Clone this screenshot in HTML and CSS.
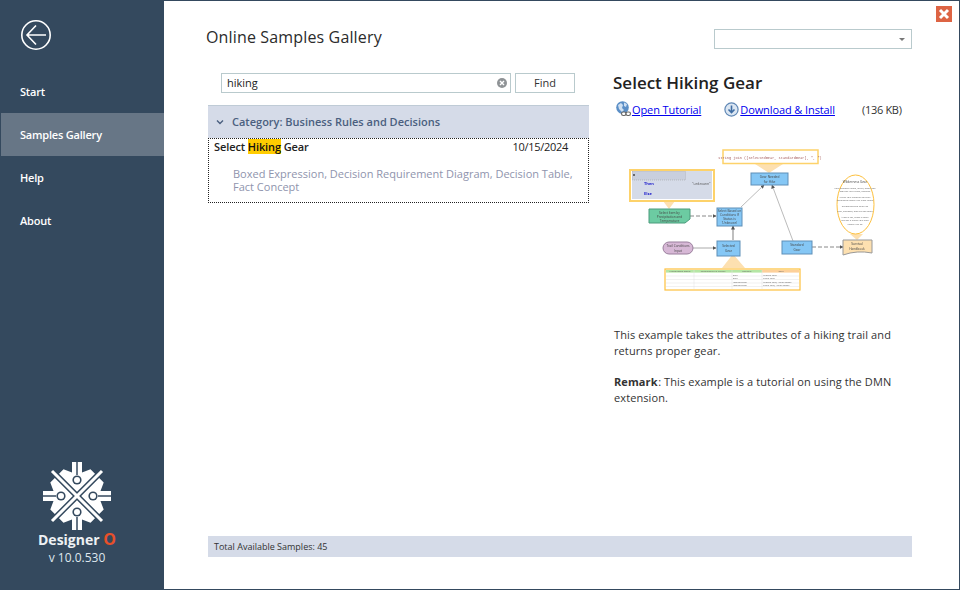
FILE: index.html
```html
<!DOCTYPE html>
<html lang="en">
<head>
    <meta charset="UTF-8">
    <title>Online Samples Gallery</title>
    <link rel="stylesheet" href="styles.css">
</head>
<body>
    <div class="window">
        <aside class="sidebar">
            <svg class="back-icon" width="32" height="32" viewBox="0 0 32 32">
                <circle cx="16" cy="16" r="14.2" fill="none" stroke="#fff" stroke-width="1.6"/>
                <path d="M26 16H7M16 6.5L7 16l9 9.5" fill="none" stroke="#fff" stroke-width="1.6"/>
            </svg>
            <nav class="nav">
                <a class="nav-item">Start</a>
                <a class="nav-item active">Samples Gallery</a>
                <a class="nav-item">Help</a>
                <a class="nav-item">About</a>
            </nav>
            <div class="brand">
                <svg class="brand-logo" width="68" height="68" viewBox="0 0 68 68">
                    <defs>
                        <g id="wedge">
                            <path d="M34 29.8L16 11.8 20.5 7.3 29 10.5V0H39V10.5L47.5 7.3 52 11.8Z" fill="#fff"/>
                            <path d="M34 0V13" stroke="#34495e" stroke-width="1.5"/>
                            <circle cx="34" cy="18" r="4.6" fill="#34495e"/>
                            <circle cx="34" cy="18" r="3" fill="#fff"/>
                        </g>
                    </defs>
                    <use href="#wedge"/>
                    <use href="#wedge" transform="rotate(90 34 34)"/>
                    <use href="#wedge" transform="rotate(180 34 34)"/>
                    <use href="#wedge" transform="rotate(270 34 34)"/>
                    <path d="M9 9L59 59M59 9L9 59" stroke="#fff" stroke-width="3"/>
                </svg>
                <div class="brand-name">Designer <span class="brand-o">O</span></div>
                <div class="brand-version">v 10.0.530</div>
            </div>
        </aside>

        <main class="content">
            <button class="close-btn" aria-label="Close">
                <svg width="16" height="16" viewBox="0 0 16 16">
                    <path d="M4 4L12 12M12 4L4 12" stroke="#fff" stroke-width="3"/>
                </svg>
            </button>

            <header class="top-row">
                <h1>Online Samples Gallery</h1>
                <div class="combo"><span class="combo-arrow"></span></div>
            </header>

            <div class="columns">
                <section class="results">
                    <div class="search-row">
                        <div class="search-box">
                            <span>hiking</span>
                            <svg width="10" height="10" viewBox="0 0 10 10">
                                <circle cx="5" cy="5" r="5" fill="#8f9396"/>
                                <path d="M3 3L7 7M7 3L3 7" stroke="#fff" stroke-width="1.4"/>
                            </svg>
                        </div>
                        <div class="find-btn">Find</div>
                    </div>

                    <div class="category">
                        <svg width="8" height="6" viewBox="0 0 8 6">
                            <path d="M1 1.5L4 4.5 7 1.5" fill="none" stroke="#4a5f7f" stroke-width="1.4"/>
                        </svg>
                        <span>Category: Business Rules and Decisions</span>
                    </div>

                    <div class="sample">
                        <div class="sample-head">
                            <span class="sample-name">Select <mark>Hiking</mark> Gear</span>
                            <span class="sample-date">10/15/2024</span>
                        </div>
                        <p class="sample-tags">Boxed Expression, Decision Requirement Diagram, Decision Table, Fact Concept</p>
                    </div>
                </section>

                <section class="detail">
                    <h2>Select Hiking Gear</h2>
                    <div class="links">
                        <svg class="link-icon" width="16" height="16" viewBox="0 0 16 16">
                            <circle cx="6.5" cy="6.5" r="6.3" fill="#5b8fc7"/>
                            <path d="M2 4l3-2 2 2-1 3 2 2-2 2-3-3zM8 1.5l3 1.5-1 3-2-1z" fill="#cfe0f2"/>
                            <g fill="#fff" stroke="#666" stroke-width="1.1">
                                <rect x="5.5" y="11" width="4.5" height="3.5" rx="1.7"/>
                                <rect x="10" y="11" width="4.5" height="3.5" rx="1.7"/>
                            </g>
                        </svg>
                        <a class="link link-tutorial">Open Tutorial</a>
                        <svg class="link-icon" width="15" height="15" viewBox="0 0 15 15">
                            <circle cx="7.5" cy="7.5" r="6.6" fill="#dbe6f2" stroke="#5f87b5" stroke-width="1.2"/>
                            <path d="M7.5 3.5V10.5M4.5 7.5l3 3 3-3" fill="none" stroke="#3f6da3" stroke-width="1.6"/>
                        </svg>
                        <a class="link">Download &amp; Install</a>
                        <span class="size">(136 KB)</span>
                    </div>

                    <!-- viewBox uses page coordinates so the nodes line up with the screenshot -->
                    <svg class="diagram" width="290" height="160" viewBox="613 140 290 160">
                        <defs>
                            <marker id="tip" markerUnits="userSpaceOnUse" markerWidth="4" markerHeight="4" refX="3.5" refY="2" orient="auto">
                                <path d="M0 0L4 2 0 4Z" fill="#555"/>
                            </marker>
                        </defs>

                        <!-- callout wedges -->
                        <g fill="#fde0b0">
                            <path d="M663 201H675L669 209Z"/>
                            <path d="M755 164H783L769 173Z"/>
                            <path d="M722 268H745L733 254Z"/>
                            <path d="M850 234H863L857 240Z"/>
                        </g>

                        <!-- connectors -->
                        <g fill="none" stroke="#aaa" marker-end="url(#tip)">
                            <path d="M733 240V226" stroke-width="1.5"/>
                            <path d="M693 248H716" stroke-width="1"/>
                            <path d="M741 207L764 185" stroke-width=".8"/>
                            <path d="M793 241L772 185" stroke-width=".8"/>
                        </g>
                        <g fill="none" stroke="#888" stroke-dasharray="4 2" marker-end="url(#tip)">
                            <path d="M690 216H716"/>
                            <path d="M812 247H843"/>
                        </g>

                        <!-- boxed expression callout -->
                        <rect x="630" y="170" width="84" height="31" fill="#fff" stroke="#fdd26a" stroke-width="2"/>
                        <rect x="632" y="171" width="80" height="28" fill="#d5dbe8"/>
                        <rect x="632.5" y="171.5" width="53" height="8.5" fill="#c9cfdd" stroke="#999" stroke-width=".5" stroke-dasharray="1 1"/>
                        <circle cx="634" cy="175" r="1" fill="#444"/>
                        <g class="diagram-blue">
                            <text x="644" y="185">Then</text>
                            <text x="644" y="195">Else</text>
                        </g>
                        <text class="diagram-small" x="692" y="185">"unknown"</text>

                        <!-- nodes -->
                        <g stroke="#5e8fb8" fill="#85c7f5">
                            <rect x="717" y="208" width="25" height="18"/>
                            <rect x="717" y="241" width="23" height="15"/>
                            <rect x="751" y="173" width="37" height="12"/>
                            <rect x="782" y="241" width="30" height="13"/>
                        </g>
                        <path d="M649 209H690V219L685 223H649Z" fill="#6ccba2" stroke="#4a9b7c"/>
                        <rect x="663" y="242" width="30" height="12" rx="6" fill="#d7b8d6" stroke="#9a7f9d"/>
                        <path d="M843 240H872V253Q857 250 843 255Z" fill="#fde0b0" stroke="#999"/>
                        <ellipse cx="855.5" cy="204.5" rx="18.5" ry="29.5" fill="#fff" stroke="#fdc03d"/>

                        <!-- code callout -->
                        <rect x="723" y="150" width="95" height="13.5" fill="#fff" stroke="#fdd26a" stroke-width="1.5"/>
                        <text class="diagram-code" x="770" y="158.5" text-anchor="middle">string join ([selectedGear, standardGear], ", ")</text>

                        <!-- decision table -->
                        <rect x="665" y="269" width="135" height="21" fill="#fff" stroke="#fdc03d" stroke-width="1.2"/>
                        <rect x="666" y="270" width="96" height="2.6" fill="#b5e6a5"/>
                        <rect x="762" y="270" width="37" height="2.6" fill="#fdd09a"/>
                        <path d="M666 276H799M666 279.5H799M666 283H799M666 286.5H799M694 270V289M732 270V289M762 270V289" stroke="#e2e2e2" stroke-width=".5"/>
                        <g class="diagram-table">
                            <text x="680" y="272.2" text-anchor="middle">Precipitation Status</text>
                            <text x="713" y="272.2" text-anchor="middle">Temperature in Celsius</text>
                            <text x="747" y="272.2" text-anchor="middle">Difficulty</text>
                            <text x="781" y="272.2" text-anchor="middle">Gear</text>
                            <text x="733" y="275.5">Easy</text>
                            <text x="763" y="275.5">Mittens Coat</text>
                            <text x="733" y="279">Easy</text>
                            <text x="763" y="279">Parka Coat</text>
                            <text x="733" y="282.5">Intermediate</text>
                            <text x="763" y="282.5">Mittens Coat, Hiking Boots</text>
                            <text x="733" y="286">Intermediate</text>
                            <text x="763" y="286">Parka Coat, Hiking Boots</text>
                        </g>

                        <!-- node labels -->
                        <g class="diagram-text">
                            <text x="669.5" y="214">Select Item by</text>
                            <text x="669.5" y="218">Precipitation and</text>
                            <text x="669.5" y="222">Temperature</text>
                            <text x="729.5" y="212">Select Based on</text>
                            <text x="729.5" y="216">Conditions If</text>
                            <text x="729.5" y="220">Status is</text>
                            <text x="729.5" y="224">'Unknown'</text>
                            <text x="728.5" y="247">Selected</text>
                            <text x="728.5" y="252">Gear</text>
                            <text x="769.5" y="178">Gear Needed</text>
                            <text x="769.5" y="183">for Hike</text>
                            <text x="797" y="246">Standard</text>
                            <text x="797" y="251">Gear</text>
                            <text x="678" y="247">Trail Conditions</text>
                            <text x="678" y="252">Input</text>
                            <text x="857" y="245">Survival</text>
                            <text x="857" y="250">Handbook</text>
                            <text x="855" y="183">Wilderness Gear</text>
                        </g>
                        <g class="diagram-table">
                            <text x="855" y="188.5" text-anchor="middle">Pack essential items, layers, water and</text>
                            <text x="855" y="192" text-anchor="middle">food for your route, distance</text>
                            <text x="855" y="197.5" text-anchor="middle">Check your weather and trail</text>
                            <text x="855" y="201" text-anchor="middle">conditions before you leave home</text>
                            <text x="855" y="206.5" text-anchor="middle">Recommended Gear List</text>
                            <text x="855" y="212" text-anchor="middle">Map, compass, first aid and more</text>
                            <text x="855" y="217.5" text-anchor="middle">Make a list, check it twice</text>
                            <text x="855" y="221" text-anchor="middle">and tell a friend your plan</text>
                            <text x="855" y="224.5" text-anchor="middle">before you go</text>
                        </g>
                    </svg>

                    <p class="desc">This example takes the attributes of a hiking trail and returns proper gear.</p>
                    <p class="desc"><b>Remark</b>: This example is a tutorial on using the DMN extension.</p>
                </section>
            </div>

            <footer class="status">Total Available Samples: 45</footer>
        </main>
    </div>
</body>
</html>
```

FILE: styles.css
```css
* {
    margin: 0;
    padding: 0;
    box-sizing: border-box;
    font-family: 'Open Sans', 'Noto Sans', sans-serif;
}

html, body {
    width: 960px;
    height: 590px;
    overflow: hidden;
}

.window {
    position: relative;
    display: flex;
    width: 960px;
    height: 590px;
    background-color: white;
    border: 1px solid #34495e;
    color: #222;
}

.sidebar {
    display: flex;
    flex-direction: column;
    width: 163px;
    background-color: #34495e;
    color: white;
}

.back-icon {
    margin: 18px 0 0 19px;
}

.nav {
    display: flex;
    flex-direction: column;
    margin-top: 19px;
}

.nav-item {
    display: flex;
    align-items: center;
    height: 43px;
    padding: 0 0 1px 19px;
    font-size: 11px;
    font-weight: 600;
    letter-spacing: -0.2px;
}

.nav-item.active {
    background-color: #677686;
}

.brand {
    display: flex;
    flex-direction: column;
    align-items: center;
    margin-top: auto;
    padding: 0 11px 24px 0;
}

.brand-name {
    margin-top: 1px;
    font-size: 14px;
    font-weight: 700;
    line-height: 18px;
    color: #eef1f4;
}

.brand-o {
    color: #e8502a;
    font-size: 16px;
    line-height: 16px;
}

.brand-version {
    margin-top: 1px;
    font-size: 12px;
    line-height: 15px;
    color: #dfe7ef;
}

.content {
    position: relative;
    display: flex;
    flex-direction: column;
    flex: 1;
    padding: 28px 47px 32px 44px;
}

.close-btn {
    position: absolute;
    top: 5px;
    right: 7px;
    width: 16px;
    height: 16px;
    border: none;
    background-color: #dd6444;
    display: flex;
}

.top-row {
    display: flex;
    justify-content: space-between;
    align-items: flex-start;
}

.top-row h1 {
    margin-left: -2px;
    font-size: 16px;
    font-weight: 400;
    line-height: 16px;
    letter-spacing: 0.15px;
    color: #2b2b2b;
}

.combo {
    position: relative;
    width: 198px;
    height: 20px;
    border: 1px solid #b9cacd;
}

.combo-arrow {
    position: absolute;
    top: 8px;
    right: 6px;
    border-left: 3px solid transparent;
    border-right: 3px solid transparent;
    border-top: 3px solid #777;
}

.columns {
    display: flex;
    flex: 1;
    margin-top: 24px;
}

.results {
    width: 381px;
    margin-right: 24px;
}

.search-row {
    display: flex;
    gap: 4px;
    margin-left: 13px;
    width: 354px;
}

.search-box {
    display: flex;
    justify-content: space-between;
    align-items: center;
    flex: 1;
    height: 20px;
    padding: 0 3px 1px 5px;
    border: 1px solid #b9cacd;
    font-size: 11px;
}

.find-btn {
    display: flex;
    justify-content: center;
    align-items: center;
    width: 60px;
    height: 20px;
    padding-bottom: 1px;
    border: 1px solid #b9cacd;
    font-size: 11px;
    color: #333;
}

.category {
    display: flex;
    align-items: center;
    gap: 8px;
    height: 33px;
    margin-top: 12px;
    padding: 0 0 1px 8px;
    background-color: #d5dbe8;
    border-top: 1px solid #bfcbd6;
    color: #4a5f7f;
    font-size: 11px;
    font-weight: 600;
}

.sample {
    height: 65px;
    padding: 1px 5px;
    border: 1px dotted #222;
}

.sample-head {
    display: flex;
    justify-content: space-between;
    padding-right: 15px;
    font-size: 11px;
    line-height: 14px;
}

.sample-name {
    font-weight: 600;
    letter-spacing: -0.1px;
}

.sample-name mark {
    background-color: #ffcc00;
    color: #111;
}

.sample-date {
    letter-spacing: -0.3px;
}

.sample-tags {
    margin-top: 13px;
    padding-left: 19px;
    font-size: 11px;
    line-height: 13px;
    color: #8f94ad;
}

.detail {
    flex: 1;
    font-size: 11px;
}

.detail h2 {
    font-size: 17px;
    font-weight: 600;
    line-height: 20px;
    color: #222;
}

.links {
    display: flex;
    align-items: center;
    height: 18px;
    margin-top: 7px;
    padding-left: 3px;
    letter-spacing: -0.1px;
}

.link {
    color: #0000ee;
    text-decoration: underline;
    margin-left: 1px;
}

.link-tutorial {
    margin: 0 23px 0 0;
}

.size {
    margin-left: 27px;
    letter-spacing: -0.3px;
    color: #333;
}

.diagram {
    display: block;
    margin-top: 22px;
}

.diagram-text {
    font-size: 3.2px;
    fill: #444;
    text-anchor: middle;
    filter: blur(0.2px);
}

.diagram-small {
    font-size: 3.6px;
    fill: #555;
    filter: blur(0.2px);
}

.diagram-blue {
    font-size: 4px;
    font-weight: 700;
    fill: #2222cc;
    filter: blur(0.2px);
}

.diagram-table {
    font-size: 2.3px;
    fill: #666;
    filter: blur(0.15px);
}

.diagram-code {
    font-size: 3.6px;
    fill: #a86060;
    font-family: 'Liberation Mono', monospace;
    filter: blur(0.2px);
}

.desc {
    width: 290px;
    margin: 0 0 15px 1px;
    font-size: 11px;
    line-height: 16px;
    letter-spacing: 0.1px;
    color: #333;
}

.desc:first-of-type {
    margin-top: 27px;
}

.desc b {
    margin-right: 0.5px;
}

.status {
    display: flex;
    align-items: center;
    height: 21px;
    padding-left: 6px;
    background-color: #d5dbe8;
    font-size: 9px;
    color: #333;
}
```
